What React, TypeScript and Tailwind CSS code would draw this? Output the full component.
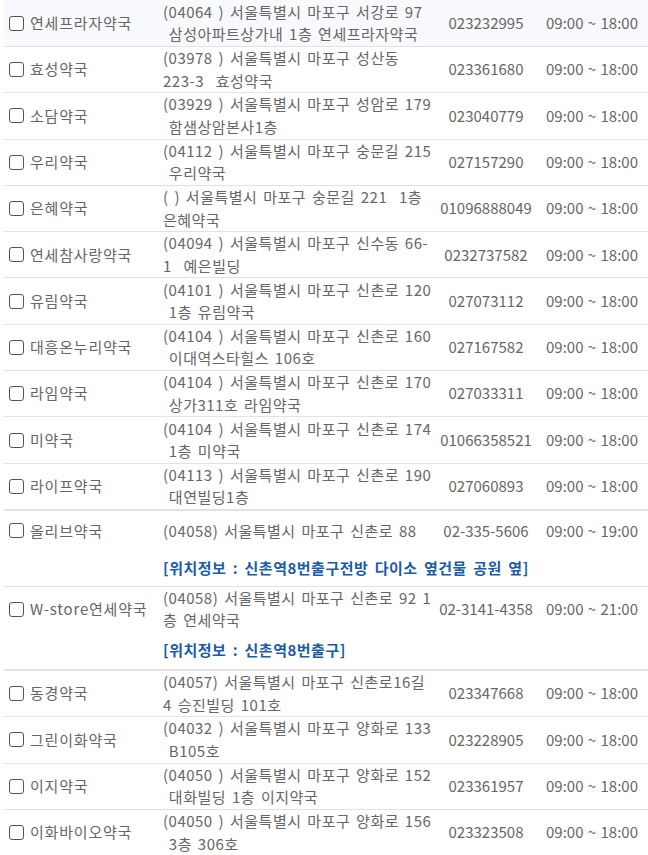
type Pharmacy = {
  name: string;
  lines: string[];
  tel: string;
  hours: string;
  note?: string;
  thick?: boolean;
};

const pharmacies: Pharmacy[] = [
  { name: '연세프라자약국', lines: ['(04064 ) 서울특별시 마포구 서강로 97', ' 삼성아파트상가내 1층 연세프라자약국'], tel: '023232995', hours: '09:00 ~ 18:00' },
  { name: '효성약국', lines: ['(03978 ) 서울특별시 마포구 성산동', '223-3  효성약국'], tel: '023361680', hours: '09:00 ~ 18:00' },
  { name: '소담약국', lines: ['(03929 ) 서울특별시 마포구 성암로 179', ' 함샘상암본사1층'], tel: '023040779', hours: '09:00 ~ 18:00' },
  { name: '우리약국', lines: ['(04112 ) 서울특별시 마포구 숭문길 215', ' 우리약국'], tel: '027157290', hours: '09:00 ~ 18:00' },
  { name: '은혜약국', lines: ['( ) 서울특별시 마포구 숭문길 221  1층', '은혜약국'], tel: '01096888049', hours: '09:00 ~ 18:00' },
  { name: '연세참사랑약국', lines: ['(04094 ) 서울특별시 마포구 신수동 66-', '1  예은빌딩'], tel: '0232737582', hours: '09:00 ~ 18:00' },
  { name: '유림약국', lines: ['(04101 ) 서울특별시 마포구 신촌로 120', ' 1층 유림약국'], tel: '027073112', hours: '09:00 ~ 18:00' },
  { name: '대흥온누리약국', lines: ['(04104 ) 서울특별시 마포구 신촌로 160', ' 이대역스타힐스 106호'], tel: '027167582', hours: '09:00 ~ 18:00' },
  { name: '라임약국', lines: ['(04104 ) 서울특별시 마포구 신촌로 170', ' 상가311호 라임약국'], tel: '027033311', hours: '09:00 ~ 18:00' },
  { name: '미약국', lines: ['(04104 ) 서울특별시 마포구 신촌로 174', ' 1층 미약국'], tel: '01066358521', hours: '09:00 ~ 18:00' },
  { name: '라이프약국', lines: ['(04113 ) 서울특별시 마포구 신촌로 190', ' 대연빌딩1층'], tel: '027060893', hours: '09:00 ~ 18:00', thick: true },
  { name: '올리브약국', lines: ['(04058) 서울특별시 마포구 신촌로 88'], tel: '02-335-5606', hours: '09:00 ~ 19:00', note: '[위치정보 : 신촌역8번출구전방 다이소 옆건물 공원 옆]' },
  { name: 'W-store연세약국', lines: ['(04058) 서울특별시 마포구 신촌로 92 1', '층 연세약국'], tel: '02-3141-4358', hours: '09:00 ~ 21:00', note: '[위치정보 : 신촌역8번출구]', thick: true },
  { name: '동경약국', lines: ['(04057) 서울특별시 마포구 신촌로16길', '4 승진빌딩 101호'], tel: '023347668', hours: '09:00 ~ 18:00' },
  { name: '그린이화약국', lines: ['(04032 ) 서울특별시 마포구 양화로 133', ' B105호'], tel: '023228905', hours: '09:00 ~ 18:00' },
  { name: '이지약국', lines: ['(04050 ) 서울특별시 마포구 양화로 152', ' 대화빌딩 1층 이지약국'], tel: '023361957', hours: '09:00 ~ 18:00' },
  { name: '이화바이오약국', lines: ['(04050 ) 서울특별시 마포구 양화로 156', ' 3층 306호'], tel: '023323508', hours: '09:00 ~ 18:00' },
];

function Checkbox() {
  return <span className="w-[15px] h-[15px] shrink-0 rounded-[3px] border border-[#555] bg-white" />;
}

function MainLine({ p, height }: { p: Pharmacy; height: string }) {
  return (
    <div className={`flex ${height}`}>
      <div className="w-[155px] flex items-center gap-[6px] pl-[5px]">
        <Checkbox />
        <span className="whitespace-nowrap tracking-[0.8px]">{p.name}</span>
      </div>
      <div className="w-[277px] pl-[4px] flex flex-col justify-center tracking-[0.5px] [word-spacing:2px]">
        {p.lines.map((line, i) => (
          <div key={i} className="whitespace-pre">
            {line}
          </div>
        ))}
      </div>
      <div className="w-[100px] flex items-center justify-center whitespace-nowrap">{p.tel}</div>
      <div className="w-[112px] flex items-center justify-center whitespace-nowrap [word-spacing:1px]">
        {p.hours}
      </div>
    </div>
  );
}

export default function App() {
  return (
    <div className="w-[648px] h-[855px] overflow-hidden bg-white text-[15px] leading-[22.5px] text-[#666] font-['Noto_Sans_CJK_KR','Noto_Sans',sans-serif]">
      {pharmacies.map((p, idx) => {
        const border = p.thick ? 'border-b-2' : 'border-b';
        if (p.note) {
          const single = p.lines.length === 1;
          return (
            <div key={p.name} className={`ml-[4px] ${border} border-[#e2e2e2]`}>
              <MainLine p={p} height={single ? 'h-[40px]' : 'h-[45px]'} />
              <div
                className={`${single ? 'h-[35px]' : 'h-[37px]'} flex items-center pl-[159px] font-bold text-[#1b5ca8] whitespace-nowrap tracking-[0.5px] [word-spacing:2.5px]`}
              >
                {p.note}
              </div>
            </div>
          );
        }
        return (
          <div
            key={p.name}
            className={`ml-[4px] ${border} border-[#e2e2e2] ${idx === 0 ? 'bg-[#f8f9fc]' : ''}`}
          >
            <MainLine p={p} height={idx === 0 ? 'h-[46px]' : 'h-[45.3px]'} />
          </div>
        );
      })}
    </div>
  );
}
